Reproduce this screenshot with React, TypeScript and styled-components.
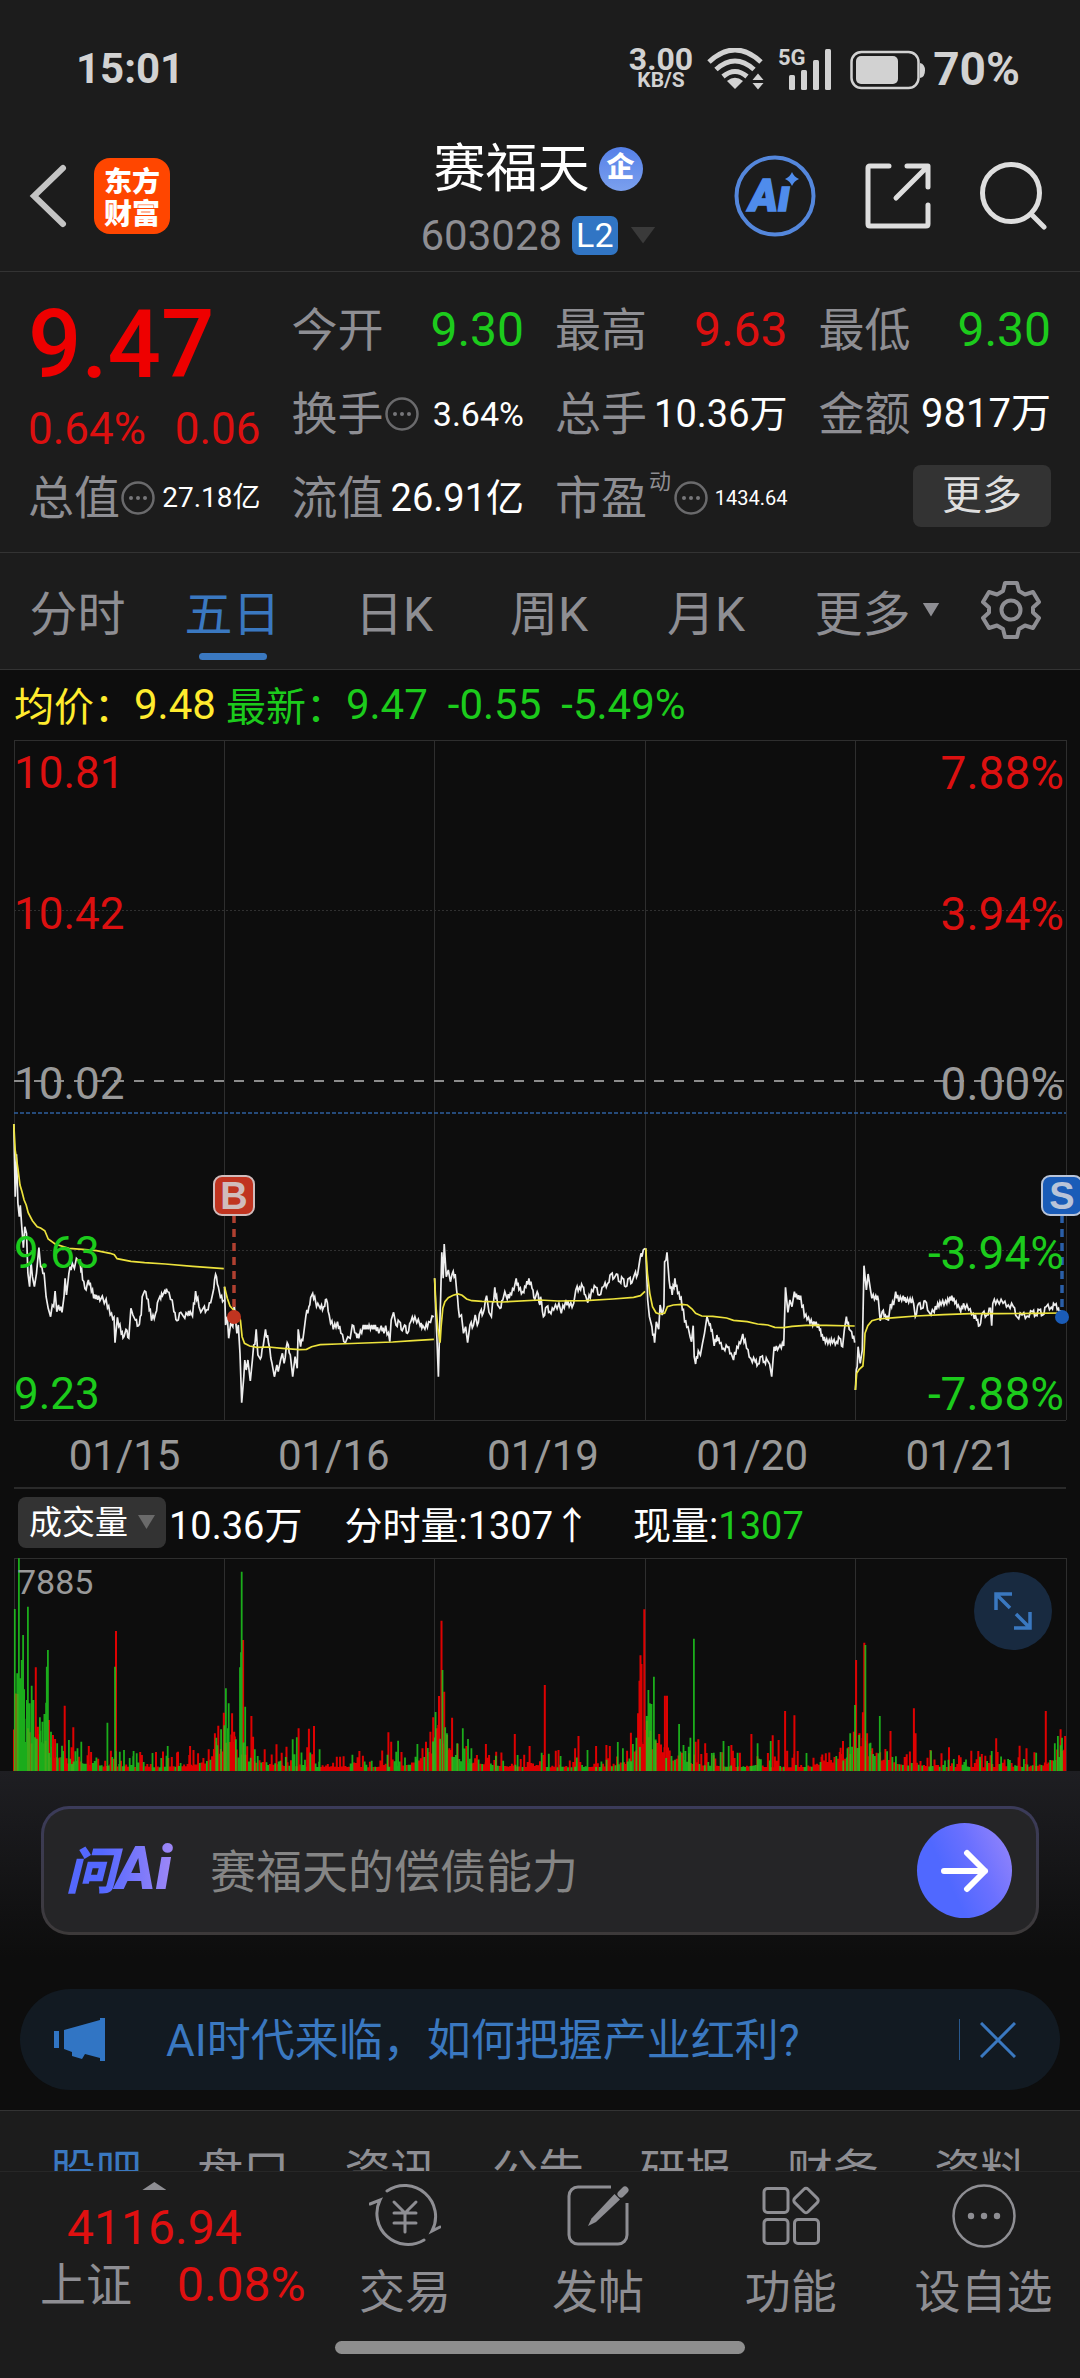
import React from "react";
import styled, { createGlobalStyle } from "styled-components";

const latin = `Roboto, "Noto Sans CJK SC", sans-serif`;

const c = {
  panel: "#1c1c1c",
  ink: "#0d0d0d",
  line: "#333333",
  grey: "#8e8e93",
  chartGrey: "#999999",
  red: "#dc1010",
  hot: "#ee0000",
  green: "#1ccb1c",
  blue: "#3a78c0",
  status: "#d2d2d2",
};

const Global = createGlobalStyle`
  * { box-sizing: border-box; }
  body { margin: 0; background: ${c.ink}; font-family: ${latin}; }
  button, input, select { font: inherit; color: inherit; border: 0; padding: 0; margin: 0; background: none; }
  button { cursor: pointer; }
  svg { display: block; }
`;

const Page = styled.div`
  display: flex;
  flex-direction: column;
  width: 100%;
  overflow: hidden;
  background: ${c.ink};
`;

/* ---------- status bar ---------- */

const StatusBar = styled.div`
  display: flex;
  align-items: center;
  justify-content: space-between;
  height: 137px;
  padding: 0 60px 0 76px;
  background: ${c.panel};
  color: ${c.status};
  font-weight: 700;
`;
const Clock = styled.time`
  font-size: 42px;
`;
const StatusGroup = styled.div`
  display: flex;
  align-items: center;
`;
const Speed = styled.div`
  display: flex;
  flex-direction: column;
  align-items: center;
  margin-right: 14px;
  font-size: 32px;
  line-height: 22px;
`;
const SpeedUnit = styled.span`
  font-size: 21px;
  line-height: 20px;
`;
const Percent = styled.span`
  margin-left: 8px;
  font-size: 46px;
`;

/* ---------- header ---------- */

const Header = styled.header`
  display: grid;
  grid-template-columns: 1fr auto 1fr;
  align-items: center;
  padding: 0 32px 2px 28px;
  background: ${c.panel};
  border-bottom: 1px solid ${c.line};
`;
const HeaderSide = styled.div<{ $end?: boolean }>`
  display: flex;
  align-items: center;
  justify-content: ${(p) => (p.$end ? "flex-end" : "flex-start")};
  gap: ${(p) => (p.$end ? "49px" : "24px")};
  margin-bottom: 14px;
`;
const IconButton = styled.button`
  display: flex;
  align-items: center;
  justify-content: center;
`;
const Brand = styled.a`
  display: grid;
  place-content: center;
  width: 76px;
  height: 76px;
  border-radius: 16px;
  background: #ff4600;
  color: #fff;
  font-family: "Noto Sans CJK SC", sans-serif;
  font-size: 28px;
  font-weight: 900;
  line-height: 32px;
  text-decoration: none;
`;
const Titles = styled.div`
  display: flex;
  flex-direction: column;
  align-items: center;
`;
const NameRow = styled.div`
  display: flex;
  align-items: center;
  gap: 9px;
  height: 64px;
`;
const Name = styled.h1`
  margin: 0;
  padding-top: 2px;
  color: #fff;
  font-size: 52px;
  font-weight: 400;
  line-height: 64px;
`;
const CorpBadge = styled.span`
  width: 44px;
  height: 44px;
  border-radius: 50%;
  background: linear-gradient(#5580e8, #7ba0ee);
  color: #fff;
  font-size: 28px;
  font-weight: 900;
  line-height: 42px;
  text-align: center;
`;
const CodeRow = styled.button`
  display: flex;
  align-items: center;
  height: 68px;
  color: ${c.grey};
  font-size: 42px;
`;
const LevelBadge = styled.span`
  margin: 0 13px 0 10px;
  padding: 0 4px;
  border-radius: 7px;
  background: #3175c4;
  color: #fff;
  font-size: 34px;
  line-height: 39px;
`;
const Caret = styled.span<{ $w: number; $h: number; $color: string; $up?: boolean }>`
  display: inline-block;
  width: ${(p) => p.$w}px;
  height: ${(p) => p.$h}px;
  background: ${(p) => p.$color};
  clip-path: ${(p) => (p.$up ? "polygon(50% 0, 100% 100%, 0 100%)" : "polygon(0 0, 100% 0, 50% 100%)")};
`;

/* ---------- quote ---------- */

const Quote = styled.section`
  display: grid;
  grid-template-columns: repeat(4, 1fr);
  grid-auto-rows: 84px;
  column-gap: 31px;
  padding: 16px 29px 12px 28px;
  background: ${c.panel};
  border-bottom: 1px solid ${c.line};
`;
const PriceBlock = styled.div`
  grid-row: span 2;
  color: ${c.red};
`;
const Price = styled.div`
  color: ${c.hot};
  font-size: 94px;
  font-weight: 500;
  line-height: 114px;
`;
const Change = styled.div`
  display: flex;
  justify-content: space-between;
  font-size: 44px;
  line-height: 54px;
`;
const Cell = styled.div`
  display: flex;
  align-items: center;
  justify-content: space-between;
  padding-bottom: 1px;
  white-space: nowrap;
`;
const Label = styled.span`
  display: flex;
  align-items: center;
  color: ${c.grey};
  font-size: 46px;
  line-height: 56px;
`;
const Sup = styled.sup`
  align-self: flex-start;
  margin: 0 2px;
  font-size: 22px;
  line-height: 24px;
`;
const Value = styled.span<{ $size: number; $color?: string }>`
  color: ${(p) => p.$color ?? "#fff"};
  font-size: ${(p) => p.$size}px;
  line-height: 56px;
`;
const MoreButton = styled.button`
  justify-self: end;
  align-self: center;
  width: 138px;
  height: 62px;
  margin-bottom: 4px;
  border-radius: 8px;
  background: #333;
  color: #dedede;
  font-size: 40px;
  line-height: 60px;
`;

/* ---------- period tabs ---------- */

const Periods = styled.nav`
  display: grid;
  grid-template-columns: 155fr 155fr 168fr 142fr 172fr 170fr 98fr;
  height: 117px;
  padding-right: 20px;
  background: ${c.panel};
  border-bottom: 1px solid ${c.line};
`;
const Period = styled.button<{ $on?: boolean }>`
  position: relative;
  display: flex;
  align-items: center;
  justify-content: center;
  gap: 12px;
  padding-bottom: 3px;
  color: ${(p) => (p.$on ? c.blue : c.grey)};
  font-size: 48px;
  &::after {
    content: "";
    display: ${(p) => (p.$on ? "block" : "none")};
    position: absolute;
    bottom: 9px;
    width: 68px;
    height: 7px;
    border-radius: 4px;
    background: ${c.blue};
  }
`;

/* ---------- chart ---------- */

const Summary = styled.div`
  display: flex;
  align-items: center;
  gap: 10px;
  height: 70px;
  padding: 0 0 2px 14px;
  color: ${c.green};
  font-size: 40px;
`;
const SummaryPart = styled.span<{ $color?: string }>`
  display: flex;
  align-items: center;
  color: ${(p) => p.$color};
`;
const Figure = styled.span`
  margin-right: 20px;
  font-size: 42px;
  &:only-of-type {
    margin-right: 0;
  }
`;
const Plot = styled.div`
  position: relative;
  svg {
    width: 100%;
    height: auto;
  }
`;
const AxisLabel = styled.span<{ $y: number; $color: string; $right?: boolean }>`
  position: absolute;
  top: ${(p) => p.$y}%;
  ${(p) => (p.$right ? "right: 16px" : "left: 14px")};
  transform: translateY(-50%);
  color: ${(p) => p.$color};
  font-size: ${(p) => (p.$right ? 46 : 44)}px;
  line-height: 48px;
`;
const Dates = styled.div`
  display: grid;
  grid-template-columns: repeat(5, 1fr);
  height: 68px;
  margin: 0 14px;
  padding-left: 6px;
  border-bottom: 2px solid #2a2a2a;
  color: ${c.chartGrey};
  font-size: 42px;
  line-height: 69px;
  text-align: center;
`;
const VolumeBar = styled.div`
  display: flex;
  align-items: center;
  gap: 42px;
  height: 69px;
  padding: 0 0 3px 18px;
  color: #fff;
  font-size: 38px;
  white-space: pre;
`;
const VolumePick = styled.div`
  display: flex;
  align-items: center;
  gap: 3px;
`;
const SelectBox = styled.label`
  position: relative;
  display: flex;
  align-items: center;
  width: 148px;
  height: 51px;
  border-radius: 8px;
  background: #333;
  font-size: 33px;
  select {
    appearance: none;
    width: 100%;
    height: 100%;
    padding: 0 0 0 11px;
    outline: none;
  }
  span {
    position: absolute;
    right: 11px;
    pointer-events: none;
  }
`;
const Green = styled.span`
  color: ${c.green};
`;
const VolumeMax = styled.span`
  position: absolute;
  top: 4px;
  left: 17px;
  color: ${c.chartGrey};
  font-size: 34px;
  line-height: 40px;
`;
const Expand = styled.button`
  position: absolute;
  top: 14px;
  right: 28px;
  display: grid;
  place-items: center;
  width: 78px;
  height: 78px;
  border-radius: 50%;
  background: #182a40;
  svg {
    width: 40px;
  }
`;

/* ---------- assistant + notice ---------- */

const Promo = styled.section`
  padding: 35px 20px 20px;
  background: linear-gradient(#1e1e22, ${c.ink} 55%);
`;
const Ask = styled.form`
  display: flex;
  align-items: center;
  margin: 0 21px 54px;
  padding: 14px 24px 14px 22px;
  border: 3px solid transparent;
  border-radius: 28px;
  background: linear-gradient(#252527, #252527) padding-box, linear-gradient(#3b3b5a, #3d3a3a) border-box;
`;
const AskLogo = styled.span`
  width: 121px;
  background: linear-gradient(90deg, #5468ff 30%, #a78bf5 95%);
  background-clip: text;
  color: transparent;
  font-size: 50px;
  font-style: italic;
  font-weight: 900;
  line-height: 64px;
  white-space: nowrap;
`;
const AskLatin = styled.span`
  font-size: 60px;
`;
const AskInput = styled.input`
  flex: 1;
  min-width: 0;
  margin-left: 23px;
  padding-top: 3px;
  font-size: 46px;
  outline: none;
  &::placeholder {
    color: #858585;
    opacity: 1;
  }
`;
const Send = styled.button`
  display: grid;
  place-items: center;
  width: 95px;
  height: 95px;
  border-radius: 50%;
  background: linear-gradient(65deg, #5068ff 35%, #6a70ff 62%, #9a88fa);
`;
const Notice = styled.div`
  display: flex;
  align-items: center;
  height: 101px;
  padding: 0 44px 0 34px;
  border-radius: 51px;
  background: #121a22;
  color: ${c.blue};
`;
const NoticeText = styled.a`
  flex: 1;
  margin-left: 60px;
  padding-bottom: 5px;
  color: inherit;
  font-size: 44px;
  text-decoration: none;
  white-space: nowrap;
`;
const Divider = styled.span`
  width: 1px;
  height: 41px;
  margin-right: 20px;
  background: #28588e;
`;

/* ---------- bottom ---------- */

const Sections = styled.nav`
  display: grid;
  grid-template-columns: repeat(7, 1fr);
  height: 61px;
  padding: 33px 26px 0 22px;
  overflow: hidden;
  background: ${c.panel};
  border-top: 1px solid ${c.line};
`;
const SectionTab = styled.button<{ $on?: boolean }>`
  height: 54px;
  color: ${(p) => (p.$on ? c.blue : c.grey)};
  font-size: 46px;
  line-height: 54px;
  white-space: nowrap;
`;
const Footer = styled.footer`
  background: ${c.panel};
  border-top: 1px solid #272727;
`;
const FooterRow = styled.div`
  display: grid;
  grid-template-columns: 309fr 193fr 193fr 193fr 193fr;
  height: 169px;
`;
const Index = styled.button`
  display: flex;
  flex-direction: column;
  align-items: center;
  justify-content: flex-start;
  padding-top: 10px;
  color: #e01010;
`;
const IndexValue = styled.span`
  font-size: 48px;
  line-height: 76px;
`;
const IndexRow = styled.span`
  display: flex;
  align-items: center;
  align-self: stretch;
  justify-content: space-between;
  padding: 0 3px 0 40px;
  font-size: 48px;
  line-height: 38px;
`;
const Muted = styled.span`
  color: ${c.grey};
  font-size: 46px;
`;
const NavItem = styled.button`
  display: flex;
  flex-direction: column;
  align-items: center;
  padding-top: 8px;
  color: ${c.grey};
  font-size: 46px;
  line-height: 80px;
  white-space: nowrap;
`;
const HomeBar = styled.div`
  width: 38%;
  height: 13px;
  margin: 0 auto 24px;
  border-radius: 7px;
  background: #8e8e8e;
`;

/* ---------- chart data: 3136 plot units across the two halves, 3 units per pixel in height ---------- */

const SX = 2.904;
const PRICE_SETS = [
  "40,192 42,300 44,410 48,283 52,430 56,470 59,436 64,510 68,563 72,500 77,520 81,640 86,680 90,605 94,650 100,680 106,640 113,563 118,620 128,640 134,710 140,745 147,770 152,735 156,740 160,693 165,755 170,735 180,757 186,710 189,655 193,705 200,640 210,610 216,625 222,595 226,600 232,600 240,660 250,690 254,668 262,668 272,715 280,705 290,722 297,708 303,730 308,717 320,765 331,772 334,848 341,772 352,820 360,830 366,808 374,835 380,745 386,765 393,780 402,797 410,765 413,710 420,693 430,718 440,782 452,760 460,720 464,710 472,707 478,693 486,695 500,720 505,755 514,782 525,757 532,768 545,765 553,755 559,768 568,693 578,740 583,757 590,745 600,750 612,728 618,700 626,643 634,680 640,712 650,720",
  "652,680 655,795 660,770 664,835 670,790 676,800 680,735 688,820 692,795 697,880 702,1028 708,950 711,900 715,930 720,900 727,963 733,900 744,808 749,885 756,897 764,860 771,808 780,850 790,910 797,950 804,915 808,935 815,900 820,880 825,910 834,848 843,885 850,950 857,890 863,925 866,808 873,860 882,820 888,770 897,740 905,707 914,710 919,740 923,730 930,745 940,740 948,718 956,765 968,808 980,785 990,820 1003,848 1010,830 1017,835 1023,795 1034,820 1042,835 1055,795 1063,808 1072,795 1082,808 1090,795 1100,820 1107,797 1115,820 1120,797 1132,845 1136,780 1143,757 1150,795 1160,785 1168,812 1175,795 1183,820 1193,785 1205,770 1220,797 1228,797 1234,808 1245,785 1260,770",
  "1262,655 1273,950 1283,577 1287,655 1290,552 1296,650 1302,630 1308,665 1313,642 1322,642 1326,690 1334,770 1340,765 1346,820 1352,800 1358,848 1365,795 1375,795 1380,765 1386,795 1395,755 1403,760 1413,707 1420,757 1427,770 1437,682 1445,735 1452,745 1460,720 1466,695 1473,718 1482,700 1492,690 1499,655 1507,690 1518,695 1527,682 1536,655 1545,685 1553,718 1560,695 1568,735 1570,710 1578,770 1588,740 1596,755 1608,750 1623,730 1630,760 1643,720 1653,740 1666,730 1672,690 1683,682 1692,680 1700,705 1707,728 1718,690 1730,682 1740,705 1753,680 1765,670 1775,642 1783,655 1790,642 1800,665 1808,655 1817,680 1827,655 1835,668 1842,645 1852,642 1858,600 1868,570 1873,565",
  "1875,565 1881,720 1886,770 1893,800 1901,848 1906,785 1913,808 1917,735 1923,765 1928,740 1930,605 1934,600 1937,577 1943,660 1952,705 1960,655 1968,700 1978,712 1988,785 1998,800 2004,830 2008,845 2013,797 2016,890 2020,912 2028,872 2034,885 2040,850 2046,820 2053,770 2060,795 2068,810 2074,858 2082,825 2090,850 2101,865 2113,862 2123,880 2130,900 2140,860 2150,850 2157,822 2168,865 2180,895 2193,905 2201,912 2211,890 2220,905 2228,900 2235,912 2241,950 2248,860 2258,870 2265,855 2276,858 2281,682 2288,757 2294,720 2300,740 2307,695 2316,718 2325,707 2336,770 2348,772 2360,797 2370,785 2380,810 2388,825 2397,848 2408,840 2418,848 2430,845 2438,835 2447,860 2452,808 2458,770 2466,808 2473,815 2482,848",
  "2484,990 2492,860 2498,910 2504,870 2509,617 2516,690 2521,642 2528,690 2532,715 2543,707 2551,720 2556,782 2562,755 2571,765 2580,782 2586,732 2595,735 2601,695 2610,725 2623,707 2631,728 2643,715 2653,730 2658,770 2668,730 2678,745 2686,722 2698,757 2713,757 2723,730 2733,735 2746,722 2756,725 2764,707 2773,730 2783,735 2790,755 2798,730 2813,750 2826,760 2836,780 2845,797 2853,760 2866,765 2876,745 2880,797 2883,730 2896,720 2913,730 2928,735 2943,740 2953,770 2968,765 2983,768 2998,755 3008,765 3018,750 3028,765 3038,740 3053,742 3063,735 3074,745 3083,768",
];
const AVERAGE_SETS = [
  "40,192 44,270 52,325 58,375 64,395 70,420 76,435 82,458 94,482 108,500 118,504 130,512 140,537 160,552 200,565 240,568 280,572 320,580 332,584 340,596 380,604 420,608 480,612 560,619 650,626",
  "652,680 660,715 668,738 680,752 690,765 698,780 703,830 710,850 725,858 745,862 780,861 820,865 870,869 890,868 905,860 930,854 980,852 1060,849 1140,846 1200,842 1260,838",
  "1262,655 1266,740 1272,810 1278,848 1281,800 1286,745 1292,725 1302,713 1316,706 1330,702 1342,706 1355,717 1370,722 1400,724 1460,726 1568,720 1620,723 1700,722 1780,717 1840,712 1860,707 1873,694",
  "1875,565 1880,640 1887,700 1895,740 1905,758 1915,762 1930,760 1938,740 1955,735 1980,733 1996,735 2010,747 2020,760 2038,768 2070,769 2110,774 2130,781 2170,785 2200,792 2230,795 2250,802 2276,803 2300,799 2340,796 2400,796 2482,798",
  "2484,990 2488,940 2495,928 2506,918 2509,880 2512,820 2520,797 2532,782 2550,777 2600,773 2660,768 2740,764 2820,761 2900,761 3000,760 3083,759",
];
const SPIKES =
  "g43,567 g55,415 g50,760 g60,775 g63,720 g67,645 g70,808 g81,560 g78,840 g86,850 g92,797 g97,840 r104,742 r110,920 g116,892 g123,905 g129,882 g134,848 g136,740 g139,690 r142,900 g148,935 r154,945 r160,957 g166,970 g180,977 r188,857 g200,960 r208,982 r213,922 g225,985 g236,965 r258,978 g312,908 g334,740 r337,633 r322,992 g348,995 g360,990 g388,993 r412,1005 g487,978 r517,995 r552,978 r562,990 r606,988 r624,940 g628,953 r634,917 g642,928 r650,878 g656,805 g664,850 r674,880 r680,935 g685,958 g697,742 g700,697 g702,455 r706,660 g712,860 r730,888 r735,950 g740,988 r803,973 r818,998 r832,980 g850,958 g862,952 r867,925 r892,982 r897,926 r912,918 g928,988 r978,1010 r1110,998 r1128,937 r1136,965 g1156,962 g1212,972 r1227,985 r1237,965 r1250,935 r1258,892 g1265,876 r1275,828 r1282,602 g1285,750 r1290,815 g1293,922 g1298,940 r1305,985 r1313,893 g1328,970 g1344,925 g1359,957 g1369,985 r1411,972 g1440,1007 r1495,942 g1503,1005 r1538,978 r1582,795 r1622,990 g1628,1008 r1670,985 r1680,948 g1706,990 r1731,978 r1761,975 r1771,978 g1794,966 g1809,985 r1821,992 r1832,938 g1838,972 g1848,953 r1853,880 r1857,782 r1860,706 r1863,732 r1871,568 g1878,888 g1883,810 g1887,850 g1892,852 g1899,770 r1904,963 r1918,982 r1931,827 r1937,827 g1972,912 g1985,975 g2000,980 g2005,953 g2015,656 r2020,965 r2028,958 r2048,970 g2101,963 g2116,978 r2124,975 g2142,998 g2073,998 r2182,942 g2200,970 g2238,963 r2244,946 r2261,960 r2280,873 r2286,992 r2307,886 r2386,1010 r2441,983 r2448,963 g2461,985 g2469,940 g2483,855 r2486,720 r2496,940 r2506,877 r2510,668 g2513,675 r2518,940 g2528,968 r2533,985 g2555,888 r2586,933 r2633,1003 r2654,865 r2659,940 r2702,990 r2756,982 r2790,1012 g2846,1010 g2880,993 r2893,955 r2961,977 r2981,985 g3009,998 r3037,873 g3063,970 g3072,948 r3080,928 g3084,953 r3093,948";

const DAY_LINES = [14, 224, 434, 645, 855, 1066];

function toPath(series: string, ticks: boolean) {
  const pts = series.split(" ").map((p) => p.split(",").map(Number));
  const out: number[][] = [];
  pts.forEach(([x, y], i) => {
    out.push([x, y]);
    const next = pts[i + 1];
    if (ticks && next && next[0] - x > 7) {
      const tick = i % 2 ? 8 : -8;
      out.push([x + (next[0] - x) * 0.35, y + (next[1] - y) * 0.4 + tick]);
      out.push([x + (next[0] - x) * 0.65, y + (next[1] - y) * 0.6 - tick]);
    }
  });
  return out.map(([x, y], i) => `${i ? "L" : "M"}${(x / SX).toFixed(1)} ${(y / 3 + 320).toFixed(1)}`).join("");
}

function makeVolume() {
  let seed = 41;
  const rnd = () => {
    seed = (seed * 16807) % 2147483647;
    return seed / 2147483647;
  };
  const paths = { red: "", green: "" };
  const base: [string, number, number][] = [];
  for (let i = 0; i < 600; i++) {
    const t = (i % 120) / 120;
    const day = Math.floor(i / 120);
    const open = (day === 0 ? 200 : 100) * Math.exp(-t * (day === 0 ? 9 : 10));
    const close = (day === 4 ? 60 : 90) * Math.exp(-(1 - t) * 18);
    const h = (open + close) * (0.55 + rnd() * 0.6) + 11 + 50 * Math.pow(rnd(), 3);
    base.push([rnd() < (day === 0 && t < 0.2 ? 0.7 : 0.38) ? "green" : "red", 14 + i * 1.7533, h / 3]);
  }
  base.forEach(([k, x, h]) => {
    paths[k as "red" | "green"] += `M${x.toFixed(1)} 213v-${h.toFixed(1)}`;
  });
  SPIKES.split(" ").forEach((s) => {
    const [x, y] = s.slice(1).split(",").map(Number);
    paths[s[0] === "g" ? "green" : "red"] += `M${(x / SX).toFixed(1)} 213V${Math.max(0, y / 3 - 138).toFixed(1)}`;
  });
  return paths;
}

const volume = makeVolume();

const AXIS = [
  { y: 4.9, price: "10.81", pct: "7.88%", color: c.red },
  { y: 25.6, price: "10.42", pct: "3.94%", color: c.red },
  { y: 50.5, price: "10.02", pct: "0.00%", color: c.chartGrey },
  { y: 75.4, price: "9.63", pct: "-3.94%", color: c.green },
  { y: 96, price: "9.23", pct: "-7.88%", color: c.green },
];

const Dots = () => (
  <svg width="36" height="36" viewBox="0 0 36 36" fill="#77777a">
    <circle cx="18" cy="18" r="15.5" fill="none" stroke="#6a6a6c" strokeWidth="2.5" />
    <circle cx="11" cy="18" r="2" />
    <circle cx="18" cy="18" r="2" />
    <circle cx="25" cy="18" r="2" />
  </svg>
);

const Marker = ({ x, letter, fill, ring, stem }: { x: number; letter: string; fill: string; ring: string; stem: string }) => (
  <g>
    <line x1={x} x2={x} y1="475" y2="572" stroke={stem} strokeWidth="3.5" strokeDasharray="8 6" />
    <circle cx={x} cy="577" r="7" fill={fill} />
    <rect x={x - 20} y="436" width="40" height="39" rx="8" fill={fill} stroke={ring} strokeWidth="2" />
    <text x={x} y="469" textAnchor="middle" fill={ring} fontFamily="Liberation Sans, sans-serif" fontWeight="700" fontSize="38">
      {letter}
    </text>
  </g>
);

export default function App() {
  return (
    <Page>
      <Global />

      <StatusBar>
        <Clock>15:01</Clock>
        <StatusGroup>
          <Speed>
            3.00<SpeedUnit>KB/S</SpeedUnit>
          </Speed>
          <svg width="58" height="42" viewBox="0 0 58 42" fill="none" stroke={c.status} strokeWidth="5">
            <path d="M2 14Q28-10 54 14M9 21.500Q28 4.500 47 21.500M16 28.500Q28 18.500 40 28.500" />
            <path d="M28 41l-8-8q8-6.500 16 0zM45.500 32l5.500-6.500 5.500 6.500zM45.500 35l5.500 6.500 5.500-6.500z" fill={c.status} stroke="none" />
          </svg>
          <svg width="58" height="50" viewBox="0 -4 58 50" fill={c.status}>
            <text x="13" y="17" fontSize="22" fontWeight="700" fontFamily="Roboto, sans-serif">
              5G
            </text>
            <rect x="24" y="27" width="6" height="15" rx="1.500" />
            <rect x="36" y="22" width="6" height="20" rx="1.500" />
            <rect x="48" y="12" width="6" height="30" rx="1.500" />
          </svg>
          <svg width="102" height="42" viewBox="0 0 102 42" fill={c.status}>
            <rect x="2" y="1" width="6" height="41" rx="1.500" />
            <rect x="28.500" y="4" width="67" height="36" rx="10" fill="none" stroke={c.status} strokeWidth="2.500" />
            <rect x="33" y="8" width="42" height="28" rx="5" />
            <path d="M97 15q5 1 5 7.500t-5 7.500z" />
          </svg>
          <Percent>70%</Percent>
        </StatusGroup>
      </StatusBar>

      <Header>
        <HeaderSide>
          <IconButton aria-label="返回">
            <svg width="42" height="68" viewBox="0 0 42 68" fill="none" stroke="#c4c4c4" strokeWidth="6" strokeLinecap="round">
              <path d="M35 6L6 34l29 28" />
            </svg>
          </IconButton>
          <Brand href="#">
            <span>东方</span>
            <span>财富</span>
          </Brand>
        </HeaderSide>
        <Titles>
          <NameRow>
            <Name>赛福天</Name>
            <CorpBadge>企</CorpBadge>
          </NameRow>
          <CodeRow>
            603028<LevelBadge>L2</LevelBadge>
            <Caret $w={25} $h={17} $color="#3a3a3a" />
          </CodeRow>
        </Titles>
        <HeaderSide $end>
          <IconButton aria-label="智能助手">
            <svg width="82" height="82" viewBox="0 0 82 82" fill="#4f8cec">
              <circle cx="41" cy="41" r="38.500" fill="none" stroke="#5487dc" strokeWidth="4" />
              <text x="15" y="56" fontSize="44" fontWeight="900" fontStyle="italic" fontFamily="Roboto, sans-serif" stroke="#4f8cec" strokeWidth="1.500">
                Aı
              </text>
              <path d="M58 17q2 5 7 7-5 2-7 7-2-5-7-7 5-2 7-7z" stroke={c.panel} strokeWidth="2" paintOrder="stroke" />
            </svg>
          </IconButton>
          <IconButton aria-label="分享">
            <svg width="66" height="66" viewBox="0 0 66 66" fill="none" stroke="#dedede" strokeWidth="5" strokeLinecap="round" strokeLinejoin="round">
              <path d="M24 3H5q-2 0-2 2v56q0 2 2 2h56q2 0 2-2V42M42 3h21v21M62 4L31 35" />
            </svg>
          </IconButton>
          <IconButton aria-label="搜索">
            <svg width="68" height="68" viewBox="0 0 68 68" fill="none" stroke="#dedede" strokeWidth="5" strokeLinecap="round">
              <circle cx="31" cy="31" r="28.500" />
              <path d="M52 53l12 12" />
            </svg>
          </IconButton>
        </HeaderSide>
      </Header>

      <Quote>
        <PriceBlock>
          <Price>9.47</Price>
          <Change>
            <span>0.64%</span>
            <span>0.06</span>
          </Change>
        </PriceBlock>
        <Cell>
          <Label>今开</Label>
          <Value $size={48} $color={c.green}>9.30</Value>
        </Cell>
        <Cell>
          <Label>最高</Label>
          <Value $size={48} $color={c.red}>9.63</Value>
        </Cell>
        <Cell>
          <Label>最低</Label>
          <Value $size={48} $color={c.green}>9.30</Value>
        </Cell>
        <Cell>
          <Label>换手<Dots /></Label>
          <Value $size={34}>3.64%</Value>
        </Cell>
        <Cell>
          <Label>总手</Label>
          <Value $size={38}>10.36万</Value>
        </Cell>
        <Cell>
          <Label>金额</Label>
          <Value $size={40}>9817万</Value>
        </Cell>
        <Cell>
          <Label>总值<Dots /></Label>
          <Value $size={28}>27.18亿</Value>
        </Cell>
        <Cell>
          <Label>流值</Label>
          <Value $size={38}>26.91亿</Value>
        </Cell>
        <Cell>
          <Label>
            市盈<Sup>动</Sup>
            <Dots />
          </Label>
          <Value $size={20}>1434.64</Value>
        </Cell>
        <MoreButton>更多</MoreButton>
      </Quote>

      <Periods>
        <Period>分时</Period>
        <Period $on>五日</Period>
        <Period>日K</Period>
        <Period>周K</Period>
        <Period>月K</Period>
        <Period>
          更多
          <Caret $w={17} $h={14} $color={c.grey} />
        </Period>
        <Period aria-label="设置">
          <svg width="60" height="60" viewBox="0 0 60 60" fill="none" stroke={c.grey} strokeWidth="4" strokeLinejoin="round">
            <path d="M24 3h12l2 8 6 3.500 8-2.500 6 10-6 5.500v5l6 5.500-6 10-8-2.500-6 3.500-2 8H24l-2-8-6-3.500-8 2.500-6-10 6-5.500v-5L2 22l6-10 8 2.500 6-3.500z" />
            <circle cx="30" cy="30" r="9.500" />
          </svg>
        </Period>
      </Periods>

      <Summary>
        <SummaryPart $color="#ffeb2e">
          均价：<Figure>9.48</Figure>
        </SummaryPart>
        <SummaryPart>
          最新：<Figure>9.47</Figure>
          <Figure>-0.55</Figure>
          <Figure>-5.49%</Figure>
        </SummaryPart>
      </Summary>

      <Plot>
        <svg viewBox="0 0 1080 681" fill="none">
          <path d={DAY_LINES.map((x) => `M${x}.500 0V680`).join("") + "M14 .5H1066M14 680.5H1066"} stroke="#2e2e2e" />
          <path d="M14 170.500H1066M14 510.500H1066" stroke="#303030" strokeDasharray="2 2" />
          <path d="M14 341H1066" stroke="#8c8c8c" strokeWidth="2" strokeDasharray="10 10" />
          <path d="M14 373H1066" stroke="#2e5f9e" strokeWidth="1.500" strokeDasharray="4 2" />
          {PRICE_SETS.map((s) => (
            <path key={s} d={toPath(s, true)} stroke="#eeeeee" strokeWidth="1.700" />
          ))}
          {AVERAGE_SETS.map((s) => (
            <path key={s} d={toPath(s, false)} stroke="#ece23c" strokeWidth="1.700" />
          ))}
          <Marker x={234} letter="B" fill="#c03420" ring="#d0bcbc" stem="#b04030" />
          <Marker x={1062} letter="S" fill="#1a5cb8" ring="#b9c4d8" stem="#2a5fa8" />
        </svg>
        {AXIS.map((a) => (
          <React.Fragment key={a.price}>
            <AxisLabel $y={a.y} $color={a.color}>{a.price}</AxisLabel>
            <AxisLabel $y={a.y} $color={a.color} $right>{a.pct}</AxisLabel>
          </React.Fragment>
        ))}
      </Plot>

      <Dates>
        <span>01/15</span>
        <span>01/16</span>
        <span>01/19</span>
        <span>01/20</span>
        <span>01/21</span>
      </Dates>

      <VolumeBar>
        <VolumePick>
          <SelectBox>
            <select aria-label="指标" defaultValue="成交量">
              <option>成交量</option>
            </select>
            <Caret $w={17} $h={14} $color="#6a6a6a" />
          </SelectBox>
          10.36万
        </VolumePick>
        <span>分时量:1307↑</span>
        <span>
          现量:<Green>1307</Green>
        </span>
      </VolumeBar>

      <Plot>
        <svg viewBox="0 0 1080 213" fill="none">
          <path d={DAY_LINES.map((x) => `M${x}.500 0V213`).join("") + "M14 .5H1066"} stroke="#2e2e2e" />
          <path d={volume.red} stroke="#f00000" strokeWidth="2" opacity="0.92" />
          <path d={volume.green} stroke="#1fd01f" strokeWidth="1.800" opacity="0.82" />
        </svg>
        <VolumeMax>7885</VolumeMax>
        <Expand aria-label="全屏">
          <svg width="40" height="40" viewBox="0 0 40 40" fill="none" stroke={c.blue} strokeWidth="3.500">
            <path d="M3 19V3h16M3 3l14 14M37 21v16H21M37 37L23 23" />
          </svg>
        </Expand>
      </Plot>

      <Promo>
        <Ask onSubmit={(e) => e.preventDefault()}>
          <AskLogo>
            问<AskLatin>Ai</AskLatin>
          </AskLogo>
          <AskInput aria-label="提问" placeholder="赛福天的偿债能力" />
          <Send aria-label="发送">
            <svg width="50" height="44" viewBox="0 0 50 44" fill="none" stroke="#fff" strokeWidth="6" strokeLinecap="round" strokeLinejoin="round">
              <path d="M4 22h41M27 4l18 18-18 18" />
            </svg>
          </Send>
        </Ask>
        <Notice>
          <svg width="52" height="46" viewBox="0 0 52 46" fill="#3175c4">
            <path d="M0 14h5v17H0zM10 13L46 3V1h5v43h-5v-3l-15-4-3 5-10-3v-4l-8-3z" />
          </svg>
          <NoticeText href="#">AI时代来临，如何把握产业红利?</NoticeText>
          <Divider />
          <IconButton aria-label="关闭">
            <svg width="36" height="36" viewBox="0 0 36 36" fill="none" stroke={c.blue} strokeWidth="3">
              <path d="M1 1l34 34M35 1L1 35" />
            </svg>
          </IconButton>
        </Notice>
      </Promo>

      <Sections>
        <SectionTab $on>股吧</SectionTab>
        <SectionTab>盘口</SectionTab>
        <SectionTab>资讯</SectionTab>
        <SectionTab>公告</SectionTab>
        <SectionTab>研报</SectionTab>
        <SectionTab>财务</SectionTab>
        <SectionTab>资料</SectionTab>
      </Sections>

      <Footer>
        <FooterRow>
          <Index>
            <Caret $w={24} $h={8} $color={c.grey} $up />
            <IndexValue>4116.94</IndexValue>
            <IndexRow>
              <Muted>上证</Muted>
              <span>0.08%</span>
            </IndexRow>
          </Index>
          <NavItem>
            <svg width="72" height="72" viewBox="0 0 72 72" fill="none" stroke={c.grey} strokeWidth="3" strokeLinecap="round">
              <path d="M18 11A31 31 0 0 1 63 51l8-4M55 60A31 31 0 0 1 11 20L1 24" />
              <path d="M25 22l11 11 11-11M36 33v19M25 33h22M25 43h22" />
            </svg>
            交易
          </NavItem>
          <NavItem>
            <svg width="72" height="72" viewBox="-4 -4 72 72" fill="none" stroke={c.grey} strokeWidth="3">
              <path d="M45 3H12a9 9 0 0 0-9 9v39a9 9 0 0 0 9 9h40a9 9 0 0 0 9-9V19" />
              <path d="M55 10l4-4" strokeWidth="7" strokeLinecap="round" />
              <path d="M48.500 10l5.500 5.500L30 38l-8 4 3.500-7.500z" fill={c.grey} stroke="none" />
            </svg>
            发帖
          </NavItem>
          <NavItem>
            <svg width="72" height="72" viewBox="-4 -4 72 72" fill="none" stroke={c.grey} strokeWidth="3" strokeLinejoin="round">
              <rect x="5" y="4.500" width="24" height="24" rx="3.500" />
              <rect x="5" y="35.500" width="24" height="24" rx="3.500" />
              <rect x="35.500" y="35.500" width="24" height="24" rx="3.500" />
              <rect x="37.500" y="7" width="19" height="19" rx="3" transform="rotate(45 47 16.500)" />
            </svg>
            功能
          </NavItem>
          <NavItem>
            <svg width="72" height="72" viewBox="0 0 72 72" fill={c.grey}>
              <circle cx="36" cy="36" r="30.500" fill="none" stroke={c.grey} strokeWidth="2.500" />
              <circle cx="23" cy="36" r="3.200" />
              <circle cx="36" cy="36" r="3.200" />
              <circle cx="49" cy="36" r="3.200" />
            </svg>
            设自选
          </NavItem>
        </FooterRow>
        <HomeBar />
      </Footer>
    </Page>
  );
}
